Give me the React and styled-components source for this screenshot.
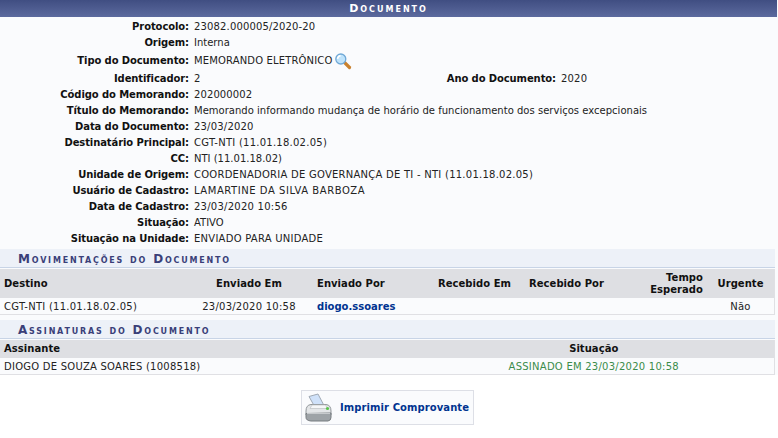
import React from "react";
import styled, { createGlobalStyle } from "styled-components";

const Global = createGlobalStyle`
  html, body { margin: 0; padding: 0; background: #fff; }
  body { font-family: "DejaVu Sans", Verdana, sans-serif; font-size: 10px; color: #222; }
`;
const Page = styled.div`width: 778px; height: 438px; overflow: hidden;`;
const Panel = styled.div`background: #fafbfd;`;
const Caption = styled.div`
  height: 17px; line-height: 17px; text-align: center; color: #fff; font-weight: bold; margin-right: 1px;
  font-size: 11px; font-variant: small-caps; letter-spacing: 2px;
  background: linear-gradient(#404e82, #5c6a9e);
`;
const Details = styled.div`
  padding: 2px 0; display: grid;
  grid-template-columns: 191px 250px 117px 1fr;
  grid-auto-rows: minmax(16px, auto); line-height: 16px;
`;
const Label = styled.div`
  text-align: right; font-weight: bold; color: #111; padding-right: 2px; letter-spacing: -0.1px; white-space: nowrap;
  align-self: center;
`;
const Value = styled.div`
  padding-left: 3px; white-space: nowrap; letter-spacing: ${p => p.$track || 0}px;
  grid-column: ${p => (p.$span ? "2 / -1" : "auto")};
`;
const TipoValue = styled(Value)`
  display: flex; align-items: center; gap: 2px; height: 20px; line-height: 22px;
`;
const Sections = styled.div`width: 775px;`;
const Section = styled.div`
  background: #edf1f8; height: 18px; line-height: 20px; padding-left: 18px; margin-top: ${p => p.$mt || 0}px;
  border-bottom: 1px solid #c8d4e6; color: #3a3f78; font-weight: bold; font-variant: small-caps;
  letter-spacing: 1.8px; font-size: 12px;
`;
const Table = styled.table`
  width: 100%; border-collapse: collapse; table-layout: fixed; margin-top: 1px;
  border: 1px solid #e0e0e4; border-width: 0 1px 1px 0; background: #fafbfd;
`;
const Th = styled.th`
  background: #dedfe3; color: #111; font-weight: bold; line-height: 12px; padding: 0 4px;
  height: ${p => p.$h}px; text-align: ${p => p.$a || "left"}; font-size: 10px; letter-spacing: 0.05px;
`;
const Td = styled.td`
  height: 16px; padding: 0 4px; white-space: nowrap; text-align: ${p => p.$a || "left"}; letter-spacing: 0.25px;
`;
const UserLink = styled.a`color: #003390; font-weight: bold; letter-spacing: 0;`;
const Signed = styled.span`color: #3a8c4a;`;
const Footer = styled.div`display: flex; justify-content: center; padding: 15px 3px 0 0;`;
const PrintButton = styled.div`
  width: 169px; height: 33px; display: flex; align-items: center; gap: 6px; padding-left: 2px; white-space: nowrap;
  border: 1px solid #dddfe6; background: #fafbfd; color: #003390; font-weight: bold; letter-spacing: 0.08px; font-size: 10px;
`;

const Lens = () => (
  <svg width="18" height="17" viewBox="0 0 18 17">
    <path d="M10.5 9.5l5 5" stroke="#c9812e" strokeWidth="3.2" strokeLinecap="round" />
    <circle cx="6.8" cy="6" r="5" fill="#bfe3fb" stroke="#6fa8d6" strokeWidth="1.3" />
    <path d="M3.6 5.8a3.4 3.4 0 0 1 3-3" stroke="#fff" strokeWidth="1.5" fill="none" />
  </svg>
);
const Printer = () => (
  <svg width="30" height="30" viewBox="0 0 30 30">
    <path d="M5 3.5L14 1l6 11.5H10z" fill="#cfe1f9" stroke="#a0a9b4" />
    <path d="M2 18q0-6 5-6.5h15q5 .5 5 6.5v4H2z" fill="#e4e6e8" stroke="#92979b" />
    <path d="M8 12h13.5l2 3.5H6z" fill="#f6f7f8" stroke="#b5b9bc" strokeWidth="0.6" />
    <path d="M2 20.5l25-.5v4.5q0 3-3 3.5H7q-5-.5-5-3.5z" fill="#9ea3a7" stroke="#777c80" />
    <path d="M3 20.5h23" stroke="#c7cacd" />
    <circle cx="23.5" cy="15.5" r="1.6" fill="#58c44b" />
  </svg>
);

const rows = [
  ["Código do Memorando:", "202000002", 0.1],
  ["Título do Memorando:", "Memorando informando mudança de horário de funcionamento dos serviços excepcionais", 0.02],
  ["Data do Documento:", "23/03/2020", 0.2],
  ["Destinatário Principal:", "CGT-NTI (11.01.18.02.05)", 0.25],
  ["CC:", "NTI (11.01.18.02)", 0],
  ["Unidade de Origem:", "COORDENADORIA DE GOVERNANÇA DE TI - NTI (11.01.18.02.05)", 0.25],
  ["Usuário de Cadastro:", "LAMARTINE DA SILVA BARBOZA", 0.55],
  ["Data de Cadastro:", "23/03/2020 10:56", 0.25],
  ["Situação:", "ATIVO", 0],
  ["Situação na Unidade:", "ENVIADO PARA UNIDADE", 0.25],
];

const Pair = ({ l, v, t }) => (<><Label>{l}</Label><Value $span $track={t}>{v}</Value></>);

export default function App() {
  return (
    <Page>
      <Global />
      <Panel>
        <Caption>Documento</Caption>
        <Details>
          <Pair l="Protocolo:" v="23082.000005/2020-20" t={0.15} />
          <Pair l="Origem:" v="Interna" t={0} />
          <Label>Tipo do Documento:</Label>
          <TipoValue $span $track={0.15}>MEMORANDO ELETRÔNICO<Lens /></TipoValue>
          <Label>Identificador:</Label><Value>2</Value>
          <Label>Ano do Documento:</Label><Value $track={0.2}>2020</Value>
          {rows.map(([l, v, t]) => <Pair key={l} l={l} v={v} t={t} />)}
        </Details>
        <Sections>
          <Section>Movimentações do Documento</Section>
          <Table>
            <colgroup>
              <col style={{ width: 185 }} /><col style={{ width: 128 }} /><col style={{ width: 111 }} />
              <col style={{ width: 101 }} /><col style={{ width: 110 }} /><col style={{ width: 72 }} /><col />
            </colgroup>
            <thead><tr>
              <Th $h={29}>Destino</Th><Th $h={29} $a="center">Enviado Em</Th><Th $h={29}>Enviado Por</Th>
              <Th $h={29} $a="center">Recebido Em</Th><Th $h={29}>Recebido Por</Th><Th $h={29} $a="right">Tempo Esperado</Th><Th $h={29} $a="center">Urgente</Th>
            </tr></thead>
            <tbody><tr>
              <Td>CGT-NTI (11.01.18.02.05)</Td><Td $a="center">23/03/2020 10:58</Td><Td><UserLink>diogo.ssoares</UserLink></Td>
              <Td /><Td /><Td /><Td $a="center">Não</Td>
            </tr></tbody>
          </Table>
          <Section $mt={5}>Assinaturas do Documento</Section>
          <Table>
            <colgroup><col /><col style={{ width: 361 }} /></colgroup>
            <thead><tr><Th $h={18}>Assinante</Th><Th $h={18} $a="center">Situação</Th></tr></thead>
            <tbody><tr><Td>DIOGO DE SOUZA SOARES (1008518)</Td><Td $a="center"><Signed>ASSINADO EM 23/03/2020 10:58</Signed></Td></tr></tbody>
          </Table>
        </Sections>
      </Panel>
      <Footer><PrintButton><Printer />Imprimir Comprovante</PrintButton></Footer>
    </Page>
  );
}
